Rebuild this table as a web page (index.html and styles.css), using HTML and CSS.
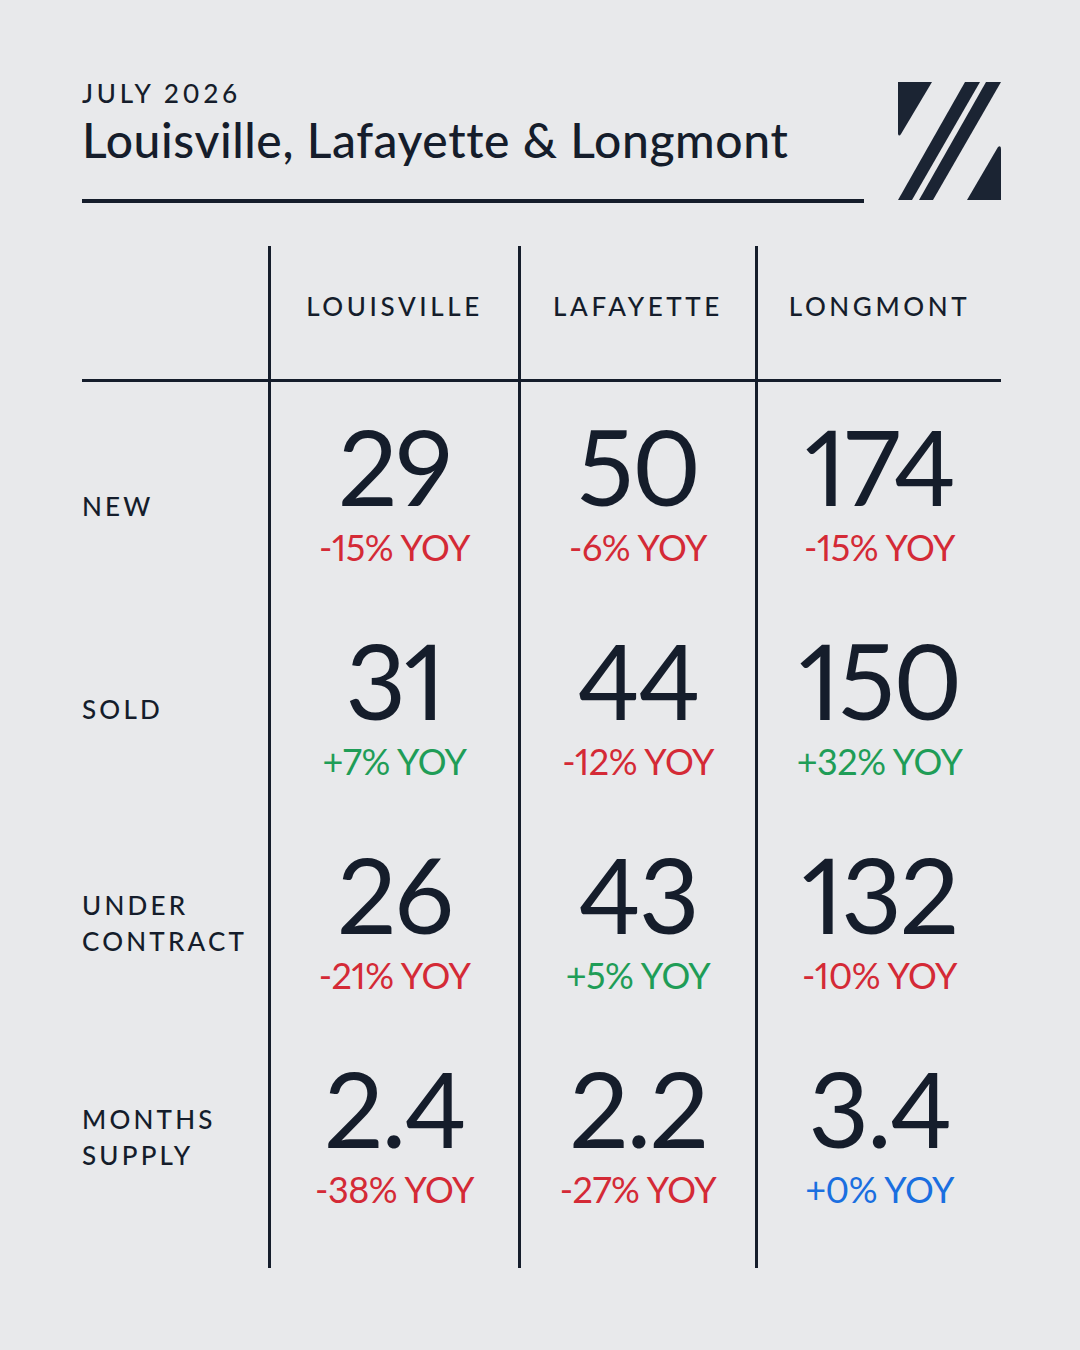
FILE: index.html
```html
<!DOCTYPE html>
<html lang="en">
<head>
<meta charset="utf-8">
<title>July 2026 — Louisville, Lafayette & Longmont</title>
<link rel="stylesheet" href="styles.css">
</head>
<body>
<main class="page">
  <header class="head">
    <div class="head-text">
      <div class="eyebrow">JULY 2026</div>
      <h1 class="title">Louisville, Lafayette &amp; Longmont</h1>
    </div>
    <svg class="logo" viewBox="898 82 103 119" width="103" height="119" aria-hidden="true">
      <path d="M898 82 H932 L901 134 Q899 137 898 134 Z" fill="#1b2433"/>
      <path d="M965 82 H980 L912 200 H898 Z" fill="#1b2433"/>
      <path d="M986 82 H1001 L933 200 H919 Z" fill="#1b2433"/>
      <path d="M967 200 L998 147 Q1001 145 1001 149 V200 Z" fill="#1b2433"/>
    </svg>
  </header>

  <section class="table">
    <div class="th corner"></div>
    <div class="th col">LOUISVILLE</div>
    <div class="th col">LAFAYETTE</div>
    <div class="th col">LONGMONT</div>

    <div class="label first">NEW</div>
    <div class="cell"><div class="num">29</div><div class="yoy down">-15% YOY</div></div>
    <div class="cell"><div class="num">50</div><div class="yoy down">-6% YOY</div></div>
    <div class="cell"><div class="num">174</div><div class="yoy down">-15% YOY</div></div>

    <div class="label">SOLD</div>
    <div class="cell"><div class="num">31</div><div class="yoy up">+7% YOY</div></div>
    <div class="cell"><div class="num">44</div><div class="yoy down">-12% YOY</div></div>
    <div class="cell"><div class="num">150</div><div class="yoy up">+32% YOY</div></div>

    <div class="label">UNDER<br>CONTRACT</div>
    <div class="cell"><div class="num">26</div><div class="yoy down">-21% YOY</div></div>
    <div class="cell"><div class="num">43</div><div class="yoy up">+5% YOY</div></div>
    <div class="cell"><div class="num">132</div><div class="yoy down">-10% YOY</div></div>

    <div class="label">MONTHS<br>SUPPLY</div>
    <div class="cell"><div class="num">2.4</div><div class="yoy down">-38% YOY</div></div>
    <div class="cell"><div class="num">2.2</div><div class="yoy down">-27% YOY</div></div>
    <div class="cell"><div class="num">3.4</div><div class="yoy flat">+0% YOY</div></div>

    <div class="foot"></div>
    <div class="foot line"></div>
    <div class="foot line"></div>
    <div class="foot line"></div>
  </section>
</main>
</body>
</html>
```

FILE: styles.css
```css
* { box-sizing: border-box; }

html, body {
  margin: 0;
  background: #e8e9eb;
}

body {
  font-family: Lato, "Open Sans", sans-serif;
  color: #151d2b;
  font-variant-numeric: proportional-nums;
}

.page {
  width: 1080px;
  height: 1350px;
  padding: 80px 79px 0 82px;
}

.head {
  display: flex;
  justify-content: space-between;
  align-items: flex-start;
}

.head-text {
  width: 782px;
  padding-bottom: 35px;
  border-bottom: 4px solid #151d2b;
}

.eyebrow {
  font-size: 26px;
  line-height: 26px;
  font-weight: 500;
  letter-spacing: 3.8px;
  margin-bottom: 10px;
}

.title {
  margin: 0;
  font-size: 48px;
  line-height: 48px;
  font-weight: 500;
  letter-spacing: 0.6px;
}

.logo {
  display: block;
  margin-top: 2px;
}

.table {
  margin-top: 43px;
  display: grid;
  grid-template-columns: 186px 250px 237px 246px;
  grid-template-rows: 136px repeat(4, 214px) 30px;
}

.th {
  display: flex;
  align-items: center;
  justify-content: center;
  padding-bottom: 14px;
  border-bottom: 3px solid #151d2b;
  font-size: 26px;
  font-weight: 500;
  letter-spacing: 3.6px;
}

.th.col,
.cell,
.foot.line {
  border-left: 3px solid #151d2b;
}

.label {
  display: flex;
  align-items: center;
  padding-top: 12px;
  font-size: 26px;
  line-height: 36px;
  font-weight: 500;
  letter-spacing: 3.2px;
}

.label.first {
  padding-top: 34px;
}

.cell {
  display: flex;
  flex-direction: column;
  align-items: center;
  justify-content: center;
}

.num {
  font-size: 105px;
  line-height: 105px;
  font-weight: 400;
  letter-spacing: -2px;
}

.yoy {
  margin-top: 11px;
  font-size: 36px;
  line-height: 36px;
  font-weight: 400;
  letter-spacing: -0.5px;
}

.down { color: #d42a36; }
.up { color: #1f9d57; }
.flat { color: #1a6fe0; }
```
